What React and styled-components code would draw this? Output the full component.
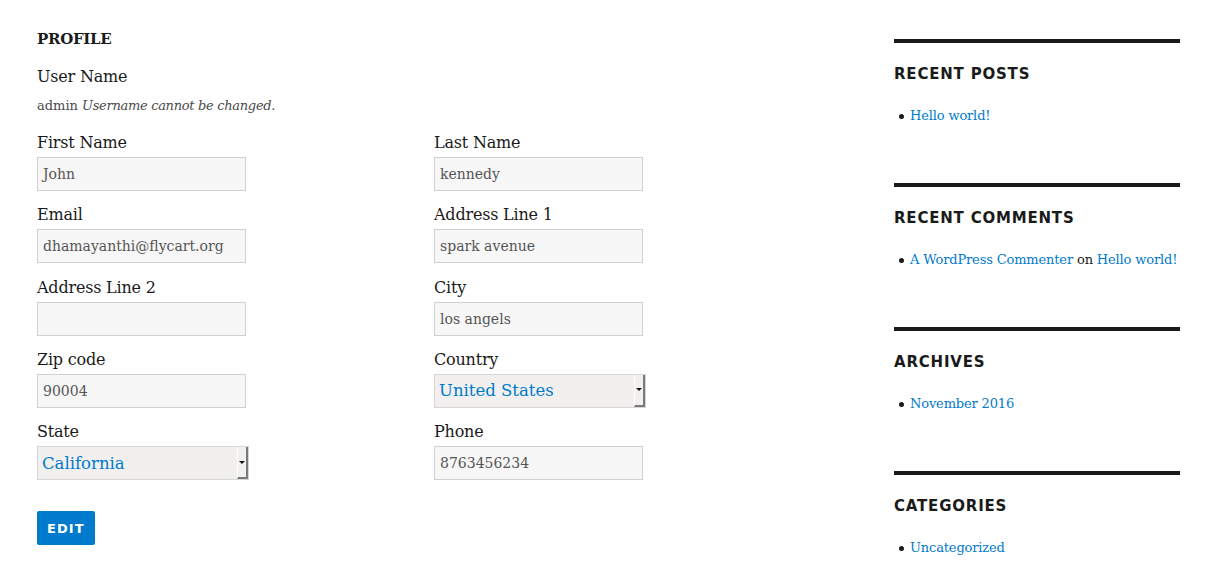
import React from 'react'
import styled, { createGlobalStyle } from 'styled-components'

const Global = createGlobalStyle`
  body {
    margin: 0;
    background: #fff;
    color: #1a1a1a;
    font-family: "DejaVu Serif", "Liberation Serif", serif;
  }
`

const Page = styled.div`
  display: flex;
  align-items: flex-start;
  padding-left: 37px;
  width: 1209px;
  height: 573px;
  box-sizing: border-box;
  overflow: hidden;
`

const Main = styled.main`
  width: 857px;
  padding-top: 28px;
`

const Title = styled.h2`
  margin: 0;
  font-size: 15px;
  line-height: 22px;
  font-weight: 700;
  letter-spacing: -0.3px;
`

const Label = styled.div`
  font-size: 16px;
  line-height: 24px;
  letter-spacing: -0.2px;
  margin-top: ${props => props.top || 0}px;
`

const Note = styled.div`
  font-size: 13px;
  line-height: 20px;
  color: #4a4a4a;
  margin-top: 7px;
  em {
    font-style: italic;
    letter-spacing: -0.3px;
  }
`

const Grid = styled.div`
  display: grid;
  grid-template-columns: 397px 260px;
  row-gap: 12.25px;
  margin-top: 15px;
`

const Field = styled.div`
  display: flex;
  flex-direction: column;
  gap: 2px;
`

const Input = styled.div`
  width: 209px;
  height: 34px;
  box-sizing: border-box;
  border: 1px solid #d1d1d1;
  background: #f7f7f7;
  color: #555;
  font-size: 14px;
  padding: 0 5px;
  display: flex;
  align-items: center;
`

const Select = styled.div`
  width: 212px;
  height: 34px;
  box-sizing: border-box;
  border: 1px solid #d6d6d6;
  background: #f1f0ef;
  color: #007acc;
  font-size: 16.5px;
  padding-left: 4px;
  display: flex;
  align-items: center;
  justify-content: space-between;
`

const Arrow = styled.span`
  width: 11px;
  height: 32px;
  box-sizing: border-box;
  border-left: 1px solid #fff;
  border-right: 2px solid #7a7a7a;
  border-bottom: 2px solid #7a7a7a;
  background: #f1f0ef;
  display: flex;
  align-items: center;
  justify-content: center;
  &::after {
    content: '';
    border-left: 3px solid transparent;
    border-right: 3px solid transparent;
    border-top: 3px solid #111;
  }
`

const Button = styled.button`
  margin-top: 31px;
  height: 34px;
  padding: 0 10px;
  border: 0;
  border-radius: 2px;
  background: #007acc;
  color: #fff;
  font-family: "DejaVu Sans", Inter, sans-serif;
  font-weight: 700;
  font-size: 13px;
  letter-spacing: 1.1px;
`

const Sidebar = styled.aside`
  width: 286px;
  padding-top: 39px;
`

const Widget = styled.section`
  box-sizing: border-box;
  border-top: 4px solid #1a1a1a;
  padding-top: 20px;
  height: 144px;
`

const WidgetTitle = styled.h2`
  margin: 0;
  font-family: "DejaVu Sans", Inter, sans-serif;
  font-weight: 700;
  font-size: 15px;
  line-height: 22px;
  letter-spacing: 0.8px;
`

const List = styled.ul`
  list-style: none;
  margin: 19px 0 0;
  padding: 0;
`

const Item = styled.li`
  display: flex;
  align-items: center;
  font-size: 13px;
  line-height: 24px;
  letter-spacing: -0.15px;
  white-space: nowrap;
  &::before {
    content: '';
    flex-shrink: 0;
    width: 5px;
    height: 5px;
    border-radius: 50%;
    background: #1a1a1a;
    margin: 0 6px 0 5px;
  }
`

const A = styled.a`
  color: #007acc;
  text-decoration: none;
`

const fields = [
  ['First Name', 'John'],
  ['Last Name', 'kennedy'],
  ['Email', 'dhamayanthi@flycart.org'],
  ['Address Line 1', 'spark avenue'],
  ['Address Line 2', ''],
  ['City', 'los angels'],
  ['Zip code', '90004'],
  ['Country', 'United States', true],
  ['State', 'California', true],
  ['Phone', '8763456234'],
]

const widgets = [
  ['RECENT POSTS', <A>Hello world!</A>],
  ['RECENT COMMENTS', <><A>A WordPress Commenter</A>&nbsp;on&nbsp;<A>Hello world!</A></>],
  ['ARCHIVES', <A>November 2016</A>],
  ['CATEGORIES', <A>Uncategorized</A>],
]

export default function App() {
  return (
    <Page>
      <Global />
      <Main>
        <Title>PROFILE</Title>
        <Label top={15}>User Name</Label>
        <Note>admin <em>Username cannot be changed.</em></Note>
        <Grid>
          {fields.map(([label, value, select]) => (
            <Field key={label}>
              <Label>{label}</Label>
              {select
                ? <Select>{value}<Arrow /></Select>
                : <Input>{value}</Input>}
            </Field>
          ))}
        </Grid>
        <Button>EDIT</Button>
      </Main>
      <Sidebar>
        {widgets.map(([title, content]) => (
          <Widget key={title}>
            <WidgetTitle>{title}</WidgetTitle>
            <List>
              <Item>{content}</Item>
            </List>
          </Widget>
        ))}
      </Sidebar>
    </Page>
  )
}
